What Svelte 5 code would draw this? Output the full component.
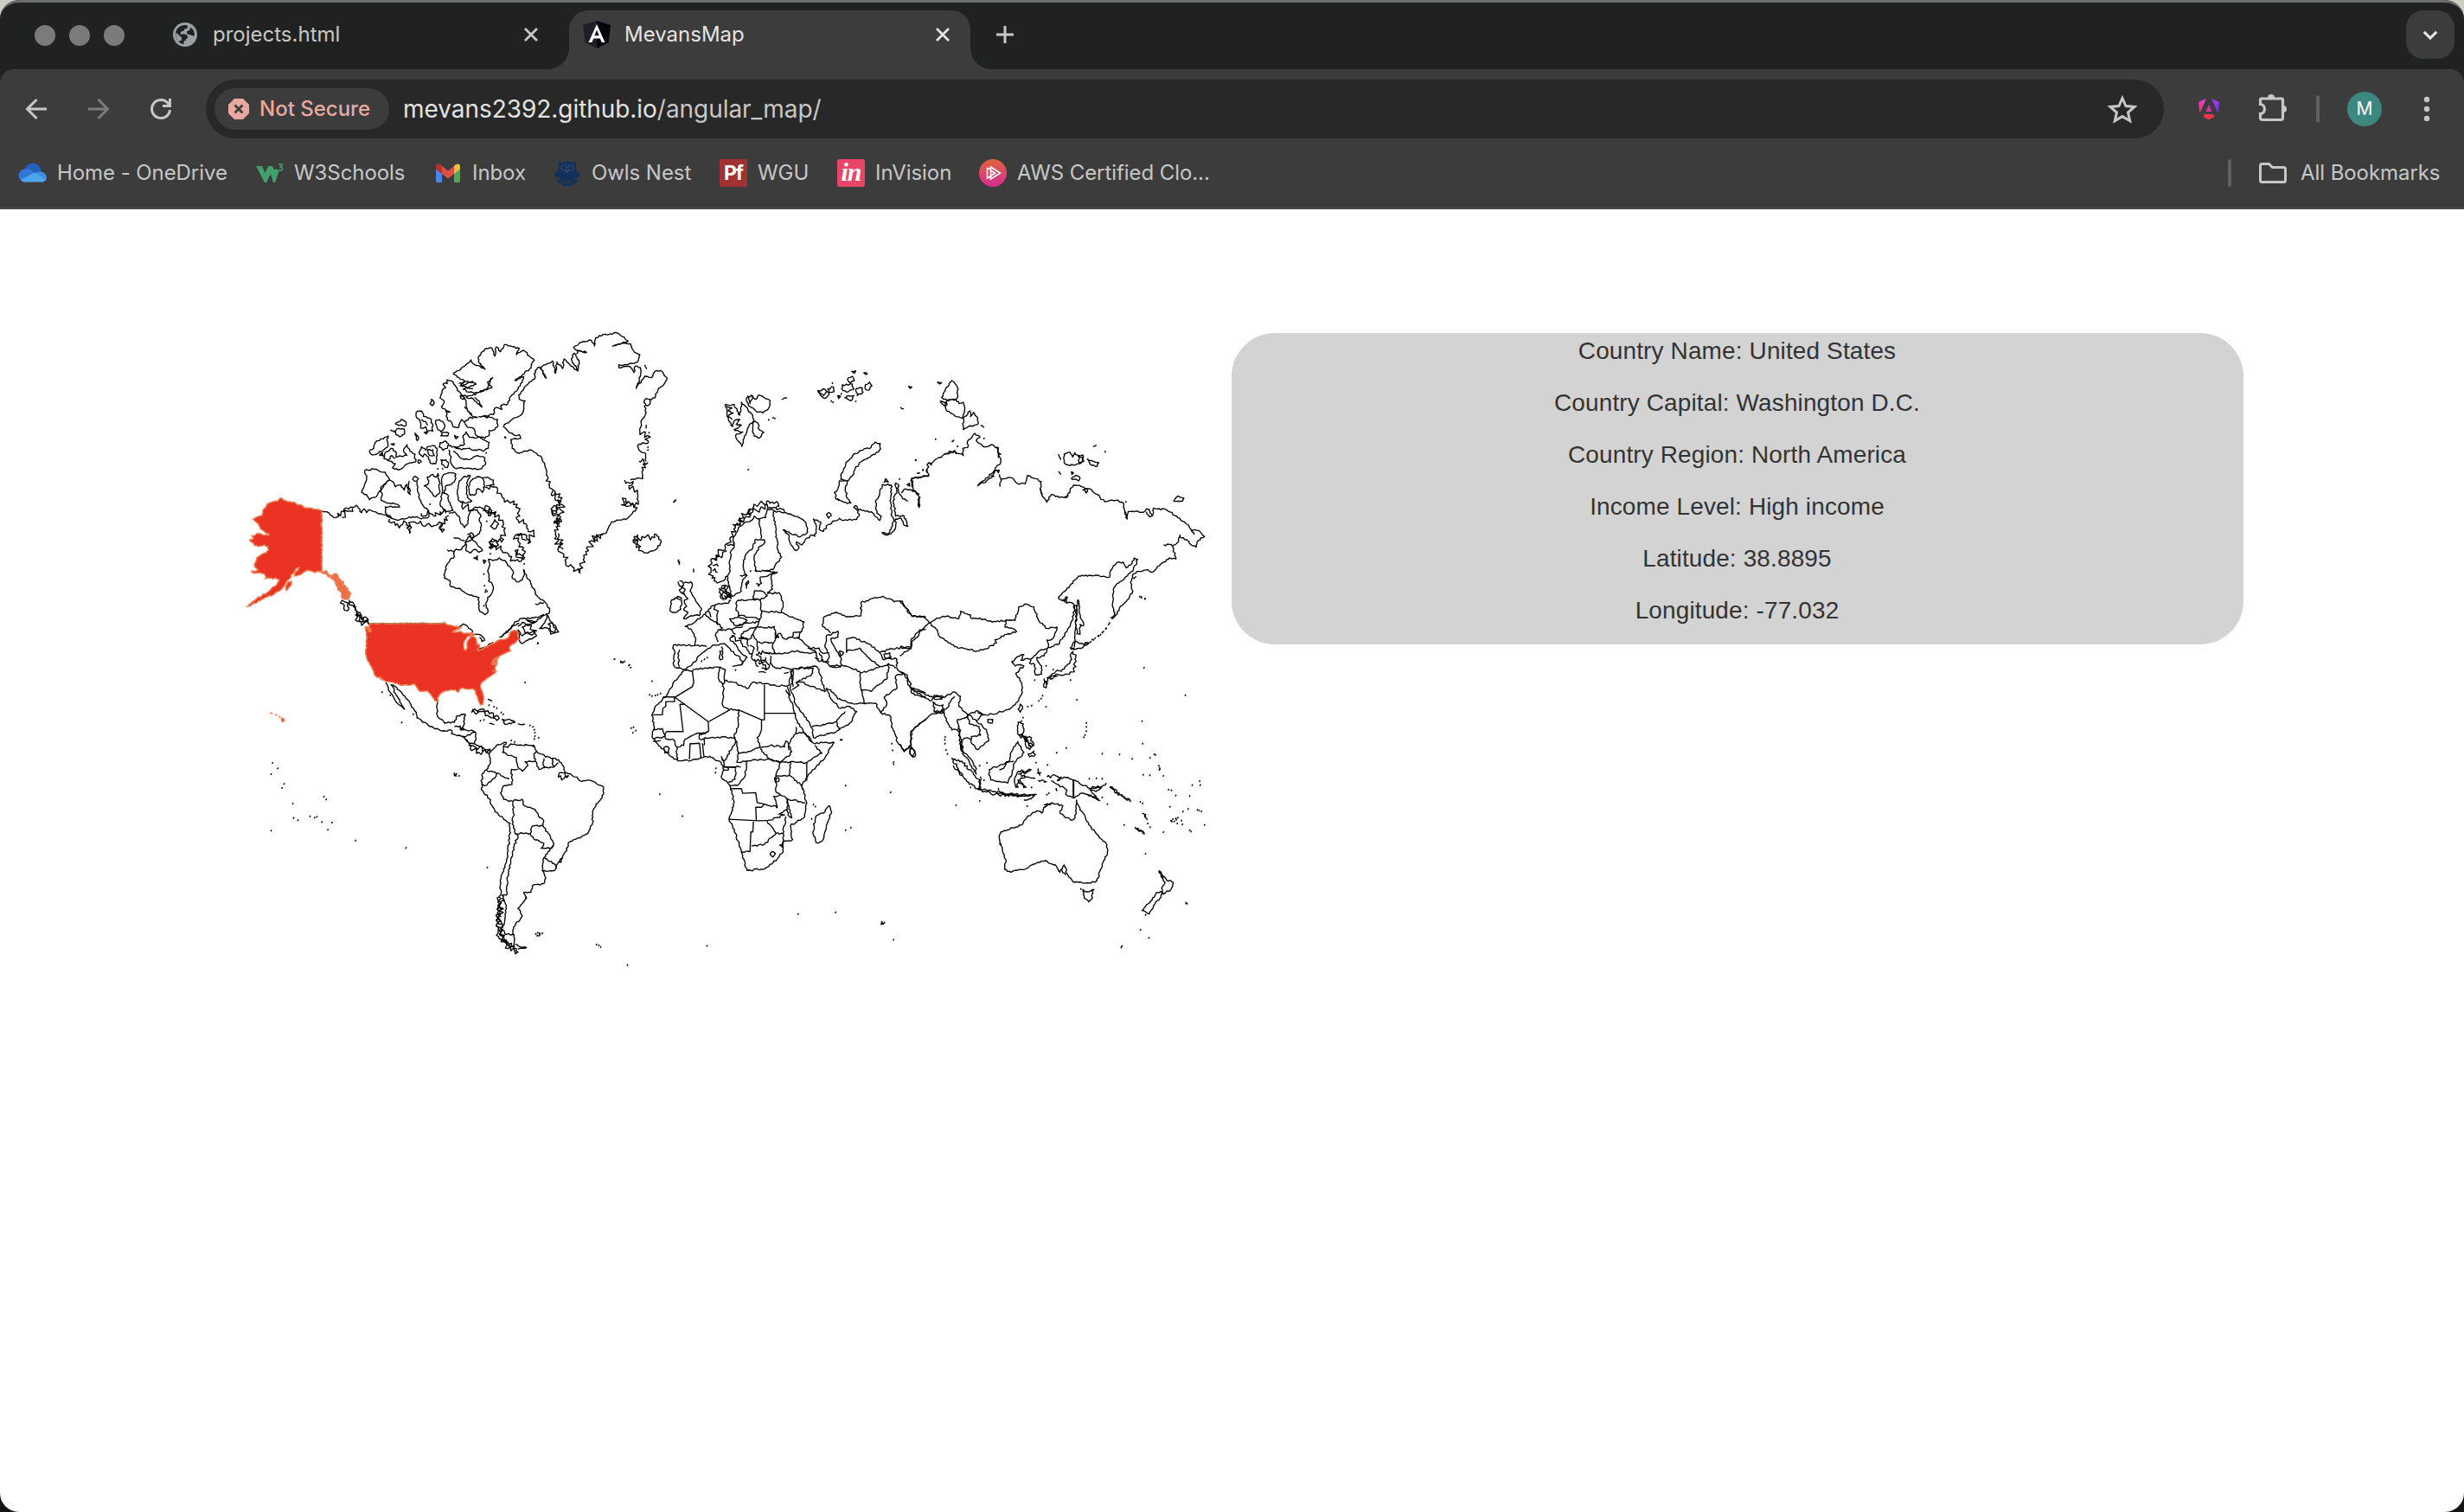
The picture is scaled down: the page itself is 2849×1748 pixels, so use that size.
<script>
  // Deterministic coastline roughening: long segments are split and nudged sideways.
  function trace(text, rough) {
    return text
      .split(';')
      .map((part) => {
        const closed = part.includes('z');
        const n = part.match(/-?\d+(\.\d+)?/g).map(Number);
        const pts = [];
        for (let i = 0; i + 1 < n.length; i += 2) pts.push([n[i], n[i + 1]]);
        if (closed) pts.push(pts[0]);
        let seed = Math.round(pts[0][0] * 7 + pts[0][1] * 13);
        const rnd = () => {
          seed = (seed * 1103515245 + 12345) % 2147483648;
          return seed / 2147483648 - 0.5;
        };
        let d = `M${pts[0][0]} ${pts[0][1]}`;
        for (let i = 1; i < pts.length; i++) {
          const [ax, ay] = pts[i - 1];
          const [bx, by] = pts[i];
          const len = Math.hypot(bx - ax, by - ay);
          const steps = rough ? Math.max(1, Math.floor(len / 6)) : 1;
          for (let s = 1; s < steps; s++) {
            const t = s / steps;
            const k = (rnd() * rough * 2) / len;
            d += `L${(ax + (bx - ax) * t - (by - ay) * k).toFixed(1)} ${(ay + (by - ay) * t + (bx - ax) * k).toFixed(1)}`;
          }
          d += `L${bx} ${by}`;
        }
        return d + (closed ? 'Z' : '');
      })
      .join('');
  }
  const dots = (text) => text.split(';').map((p) => `M${p.trim()}l4 2`).join('');

  const sheets = [
    {
      at: 'translate(270 370) scale(.33333)',
      rough: 12,
      fjord: `785 630 790 645 830 655 870 658 885 648 900 668 920 685 935 710 938 735 925 755 928 770 890 768 885 788 910 785 930 800 955 820 975 835 990 838 1000 830 975 800 995 815 1005 830 1005 790 985 765 975 748 1000 742 1020 775 1025 755 1040 740 1020 725 1005 705 980 690 988 665 970 640 950 625 930 615 915 590 890 575 870 580;
        352 686 360 670 380 665 398 655 415 650 425 642;375 685 385 672 400 662 410 652;540 690 545 703 560 712 585 710 600 705 610 740 612 715 620 700 640 705 670 708 700 712 712 700 722 735 724 705 740 695 745 678;650 670 665 680 675 660 700 680 715 665 735 670;400 970 412 990 425 1010 440 1020 465 1040;402 978 418 990 432 1014;422 1022 440 1045 468 1055 450 1035z;424 1026 450 1048;375 972 385 978 395 1008 383 990z;865 660 880 670 895 660 905 675 890 678z;1000 1065 1020 1060 1035 1075 1050 1078 1025 1090 1010 1085z;1090 1055 1105 1050 1118 1070 1112 1085 1098 1075z;810 745 830 742 820 755;985 740 1000 760 1015 765`,
      coast: `304 662 322 665 335 677 352 686;425 642 432 652 443 668 452 655 460 668 470 658 490 665 510 672 540 684;
        540 684 560 692 590 690 620 682 635 682 650 690 675 685;745 670 765 665 780 680 785 700 800 720 812 705 812 685 820 660 845 660 855 675 853 700 858 715 852 740 835 750 820 765 805 770 790 795 770 795 762 810 765 820 750 830 738 850 732 870 730 895 748 903 753 925 780 930 800 945 830 958 850 963 848 985 852 1010 870 1022 880 1015 875 990 880 962 893 950 900 930 895 912 883 905 885 885 880 870 888 850 883 830 905 832 920 825 945 840 960 860 968 870 965 895 980 908 1000 902 1008 880 1005 865 1015 890 1030 915 1045 945 1060 965 1080 980 1095 1000 1092 1018 1065 1025 1040 1033 1000 1035 980 1045 965 1060 950 1078 925 1098;
        1045 985 1075 980;740 797 765 805;762 755 800 765;820 745 805 765 805 800 820 808 835 795 850 805 862 800 845 780 830 765z;
        778 625 775 590 780 565 795 545 820 540 810 560 808 590 810 615 825 628 800 635z;820 560 830 550 850 543 862 548 870 575 862 598 845 585 838 605 820 608 815 585z;862 548 880 545 900 555 902 572 875 575;
        540 555 520 570 508 595 515 605 510 625 525 632 570 640 575 648 525 648 525 665 550 690;676 685 675 665 650 635 640 600 635 565 640 550 628 542 620 553 632 560;608 558 605 575 612 605 605 600 600 570 590 590 580 572 560 578 550 560 540 555;
        455 520 485 517 510 527 525 528 540 555 515 575 500 600 490 615 470 623 460 605 443 598 452 575 460 555z;
        690 535 700 545 708 532 712 560 714 600 700 612 690 605 675 585 660 575 675 565 670 545z;728 535 745 530 770 535 765 560 750 572 735 575 730 600 722 598 722 545z;722 600 740 605 750 640 760 660 735 665 715 640z;
        760 455 775 465 785 478 800 483 825 480 845 470 868 475 873 500 860 515 830 517 790 512 765 513 755 500 750 470 745 450;735 485 745 495 740 512 720 500 718 485z;
        650 440 665 452 670 440 690 435 705 445 705 470 700 498 680 495 675 475 660 465 655 475 642 460z;672 450 690 450 695 470 680 470z;
        525 460 545 445 560 455 562 475 580 472 600 470 588 455 600 432 610 455 628 465 630 492 610 495 590 508 570 520 550 512 560 498 540 490 520 480z;532 488 548 470 560 480;505 470 515 460 518 472z;
        470 455 485 445 490 425 510 412 535 402 530 415 535 435 520 450 500 462 480 468z;632 320 650 315 658 335 680 340 688 360 690 385 670 385 665 370 648 375 645 350 635 340z;648 345 665 352 672 365;
        700 348 712 345 728 358 730 375 718 388 705 375z;560 360 580 345 597 355 595 368z;560 385 570 375 590 378 592 395 575 405 562 398z;543 380 558 390;628 392 640 405 636 418z;722 390 745 392 742 402 718 402z;765 400 778 405 770 412z;685 275 695 288 688 297 680 290z;
        715 425 735 420 745 430 740 445 725 452 712 440z;660 390 672 388 668 395z;545 430 556 429 555 434z;640 485 650 492 640 497z;
        780 440 800 430 795 400 805 388 815 405 835 410 850 405 865 415 885 425 882 445 865 455 850 448 830 452 810 445 790 450 765 440z;745 437 775 440;
        740 207 760 215 775 245 795 262 805 280 808 305 830 335 845 338 815 340 800 355 790 345 780 372 760 370 755 355 740 345 735 315 750 320 735 312 720 300 730 285 715 270 722 245 735 235 725 222 740 220z;800 300 825 330;785 262 797 262 797 275 787 272z;
        760 185 780 175 800 160 822 138 835 155 870 170 848 145 850 125 870 100 895 97 905 125 910 93 925 110 938 85 960 90 990 98 980 120 1005 105 1025 125 1042 140 1025 170 1000 190 975 210 1005 197 1000 215 985 240 960 265 950 290 925 298 930 310 905 305 900 328 850 335 890 338 915 345 915 370 905 380 885 383 885 400 870 410 850 405 840 400 830 375 810 372 800 358;
        760 185 785 205 800 210 785 228 815 215 840 222 795 240 815 250 845 252 875 240 898 200 880 215 895 235 860 248 820 262 790 265;805 268 825 270 845 290 860 302 850 280 835 268;790 230 830 238;780 220 830 212;850 148 872 172;
        890 715 905 692 918 708 905 725z;885 770 910 765 918 780 895 790z;832 825 845 818 845 832z;865 832 874 835 868 844z;
        1075 1020 1050 1045 1020 1055 1000 1048 985 1062;1085 1022 1078 1050 1060 1070 1085 1068 1100 1080 1115 1085 1118 1065 1105 1050 1095 1040z;985 1075 1000 1095 1015 1085 1040 1080 1050 1095 1020 1110 1000 1122 990 1110z;1015 1040 1045 1045 1030 1048z`,
      border: '',
      specks: '678 638;705 515;722 515;875 697;887 810;865 880;867 920;865 990;873 460;872 935;876 940;870 942;1052 1120;940 408;1005 845'
    },
    {
      at: 'translate(540 370) scale(.33333)',
      rough: 12,
      fjord: `290 605 285 575 275 530;592 640 540 640 590 652;455 745 430 765 420 800 405 825 400 860 390 878 370 860 350 855 335 815 318 785 305 745 320 715 300 705 315 680 292 660 310 640 325 630 290 605;300 590 315 615 328 640 322 670 325 700 310 705;575 765 590 745 600 765 615 755 640 752 655 742;598 785 575 762 590 752;545 555 575 560 560 575 590 590;532 640 550 620 560 630;595 490 625 495 605 525;598 385 625 400 628 425;455 745 440 760 470 745;315 740 328 790 332 795`,
      coast: `275 530 270 510 258 478 240 462 215 450 178 462 155 445 150 415 185 410 180 398 160 398 140 385 125 370 135 358 160 340 188 327 195 300 200 280 180 275 178 260 195 240 215 215 232 205 235 175 250 163 273 202 255 165 295 142 305 185 310 145 330 168 335 135 360 160 383 177 387 140 370 115 360 135 383 175;378 118 382 105 413 112 375 103 368 95 400 75 430 70 440 90 445 62 470 50 520 45 558 72;502 92 530 82 565 82 575 105 598 120 590 145 560 153 525 155 525 165 565 162 577 182 582 160 600 165 600 195 585 237 615 195 638 200 650 178 675 178 692 200 680 225 662 238 650 270 632 275;558 72 530 84 502 92;632 275 620 272 612 285 620 297 633 292z;615 295 620 320 605 345 598 385;628 425 595 430 590 437 600 455 615 460 620 490;605 525 608 550 585 550 565 555;590 590 592 640;590 652 555 688 500 700 480 740 455 745;655 742 672 770 655 795 625 808 595 800 600 785 578 772;290 655 300 643 312 650 310 668 297 672z;308 690 320 690 318 708 308 705z;615 155 622 170`,
      border: '',
      specks: '128 405;618 365;618 372;628 390;624 440;624 450;714 630;718 626;730 832;733 838;733 845;508 1175;530 1183;538 1186;560 1195;242 1120'
    },
    {
      at: 'translate(740 370) scale(.33333)',
      rough: 11,
      fjord: `265 912 248 895 245 860 245 830 270 808 295 790 310 760 330 720 345 690 375 660 410 640 445 628 480 645 462 650 440 640 415 655 390 665 360 690 335 705 320 708;250 850 270 855;250 870 268 875;255 830 285 815 300 800;300 780 325 770;375 655 385 675;345 685 355 700;470 650 500 665;280 925 295 920 300 945 315 965 295 970;290 955 318 958;135 905 150 920 145 945 155 950`,
      coast: `295 292 315 295 325 292 335 315 345 330 350 285 365 300 375 318 390 330 395 350 378 362 370 385 360 410 352 438 335 415 330 400 355 388 325 380 350 365 332 362 345 345 325 350 320 370 305 345 300 320z;
        368 270 385 260 400 275 410 260 430 270 450 280 445 305 425 322 400 315 380 300 370 285z;390 352 405 355 412 380 428 390 410 410 395 402 390 380z;490 276 508 270;299 300 318 305 305 315 322 322 304 335 318 345;372 262 380 290 390 262;
        615 245 640 240 655 255 640 272 625 262z;620 248 635 262 645 248;650 238 670 232 672 248 655 250z;700 225 735 222 740 240 715 250 698 238z;718 205 735 195 742 210 728 218z;748 238 770 235 772 250 752 262z;780 225 795 215 803 228 795 242 780 240z;715 265 740 262 730 280 715 272z;733 178 747 176 742 185z;775 183 787 186 782 189z;930 230 942 232 936 237z;902 302 914 308;684 262 694 264 688 272z;
        695 540 705 515 718 490 740 465 770 452 800 442 815 423 832 428 833 448 815 465 790 478 765 492 745 515 735 540 720 558 695 552z;690 558 718 558 710 590 720 620 730 635 705 632 680 622 673 598 685 585z;
        265 912 285 905 302 888 312 870 308 840 315 800 325 790 322 755 345 715 370 700 385 695 395 680 410 690 418 730 418 758;302 888 305 915 310 935 318 958 330 950 350 940 355 900 370 885 360 870 358 840 365 815 390 790 400 760 430 762 432 772 415 785 395 815 398 870 430 870 460 865 475 840 490 822 478 800 470 740 468 700 460 680 465 662 440 655 435 685 410 690;
        465 662 490 668 520 672 550 685 575 705 580 735 555 752 520 740 495 728 515 745 520 775 540 800 550 790 540 770 560 780 570 765 595 745 605 750 610 720 600 690 625 700 620 725 635 733 650 710 690 688 700 695 750 692 758 680 755 662 740 650 745 643 757 658 775 660 800 665 830 695 835 680 820 670 815 630 830 600 840 570 870 572 868 620 872 680 880 695 870 725 860 740 838 738 850 745 868 742 885 720 885 690 905 688 915 712 928 715 915 680 885 680 880 640 878 615 890 600 885 565 895 570 895 595 910 620 928 628;
        905 600 920 585 955 595 968 615 963 645;968 605 945 590 942 548 1000 542 995 520;845 562 850 550 860 562z;645 675 655 668 662 678 652 687z;925 572 933 566 934 576z;272 930 280 965 290 972;345 885 368 886;365 915 375 905 368 930z;130 835 136 845;185 862 186 875;430 870 475 875 455 882`,
      border: '',
      specks: '443 345;458 338;464 340;372 518;664 218;660 280;666 284;745 281;695 255;708 268;897 550;952 485;960 530;978 518;116 628;380 870;400 868;682 620;686 624'
    },
    {
      at: 'translate(270 680) scale(.33333)',
      rough: 9,
      fjord: `925 1065 915 1100 912 1165 920 1215 950 1250 985 1262 970 1240 940 1225 925 1180 925 1130 930 1075;918 1105 935 1110;912 1130 928 1140;912 1150 928 1165;918 1180 930 1190;920 1200 940 1215;935 1220 960 1245;945 1225 972 1240;920 1070 918 1110 916 1160 924 1205 948 1235;825 430 850 422 885 435 920 452 885 445 850 428z;815 545 850 570 890 565 870 560 840 552z;1125 655 1140 640 1160 650 1145 660z;1125 950 1140 935`,
      coast: `526 328 545 365 560 390 592 420 580 400 560 365 545 335 565 345 600 385 632 430 635 450 680 480 715 493 755 493;
        706 394 705 440 730 468 765 465 775 442 803 438 795 480 785 490 830 495 838 500 835 540 875 560 890 558;755 493 755 505 780 510 800 520 820 545;
        765 480 785 478 785 490;780 510 800 515 835 500;785 490 800 488;800 515 812 535 835 540;930 455 950 455 975 465 940 472z;885 470 903 472;985 470 1010 472;880 385 895 392;
        890 570 910 545 945 535 935 550 950 552 960 540 1000 545 1040 545 1050 565 1080 585 1115 590 1135 605 1150 640 1190 655 1200 668 1240 668 1282 690 1282 715 1248 765 1243 820 1225 852 1160 882 1155 910 1130 945 1110 980 1070 980 1082 1005 1075 1025 1035 1032 1030 1055 1005 1055 1015 1075 985 1110 1000 1138 970 1175 968 1200;
        975 1235 1000 1246 1015 1246 985 1252;925 1065 925 1010 945 950 955 880 958 815 905 775 885 730 858 695 860 680 860 650 875 630 890 605 885 570;
        935 550 932 570 955 580 980 588 985 620 1000 635 1020 615 1010 602 1045 600 1040 575 1050 565;1045 600 1058 628 1080 622 1110 620 1125 605;1075 590 1072 605 1080 622;1108 590 1104 608 1110 620;
        985 628 962 628 965 680 935 685 925 710 935 732 955 740 1000 732 1003 750 1045 768 1060 795 1075 808 1072 825 1090 850 1105 875 1110 890 1075 935 1070 980;
        875 630 910 642 955 662;910 642 905 658 870 685 860 680;968 742 970 790 965 805 975 850 985 858 970 900 960 950 950 1000 945 1065 930 1065 945 1100 938 1160 932 1180;
        975 852 1028 850 1035 825 1072 825;1028 850 1040 870 1075 885 1065 902 1095 902 1110 890;1075 932 1115 960 1118 970;935 1185 940 1200 972 1202 972 1245;
        780 135 795 124 810 132 822 142 828 155;835 160 855 162 870 180 860 185 852 170;842 213 868 205 900 188;920 170 945 155 965 132 990 122`,
      border: '',
      specks: '512 360;580 465;1008 326;1318 245;1340 256;1345 256;1052 190;132 605;150 624;127 644;172 678;165 692;202 746;310 722;318 732;205 796;220 804;262 790;278 795;286 792;303 810;338 812;324 837;127 840;420 874;595 900;877 968;762 642;766 646;770 643;763 648;768 650;779 650;1045 1198;1052 1194;1060 1200;1068 1196;1050 1204;1058 1196;1056 1204;1256 1235;1264 1238;1270 1243;1010 1072;883 405;900 410;910 415;925 430;932 436;853 459;865 456;1025 475;1035 480;1040 490;1042 500;1042 512;1040 522;1055 518;960 527;972 532;1008 542;1036 548;540 370;620 436;935 462'
    },
    {
      at: 'translate(720 560) scale(.33333 .35714)',
      rough: 8,
      fjord: `340 335 355 330 350 350 370 355 355 370 342 360z;470 555 480 575 500 580 505 595 485 585 470 575;455 565 480 570 495 560;480 595 500 600;375 490 400 505 430 535 445 560 460 580 470 590;460 550 490 545 510 550;190 315 205 330 200 350 210 355;530 480 540 495 525 495`,
      coast: `210 320 235 315 240 330 232 345 245 365 258 385 272 402 265 425 235 425 210 435 225 415 210 405 220 395 212 375 225 370 210 355;165 380 185 365 203 375 200 405 180 415 163 410z;175 372 190 362 205 370;
        375 375 360 385 325 388 305 395 285 420 270 430 250 445 215 460 235 468 250 495 248 522 205 520 175 520 172 530 180 545 175 565 178 590 200 595 215 600 240 582 255 570 262 555 290 535 318 520 350 515 375 540 400 555 415 575 410 585 430 560 405 540 385 515 370 500 385 490;
        530 548 518 530 520 515 532 490 545 482 560 500 580 495 610 497 635 520 670 545 640 545 600 540 560 545z;585 495 590 480 620 475 605 500;512 555 510 580 530 595 565 595 600 597 665 588;640 530 680 530 690 545 715 545;
        590 600 588 635 580 655 583 670 600 715 635 755 655 790 660 820 740 800 790 770 810 735 780 718 755 725 730 705 715 680 705 660 720 665 745 695 770 700 785 708;565 665 575 690 590 720 600 760 625 800 650 825;
        205 600 240 605 250 598 330 592 355 600 352 635 380 640 435 660 450 640 490 645 530 652 575 650 588 600;
        210 605 180 635 165 660 150 685 110 720 100 748 108 790 100 815 130 850 165 880 190 895 240 892 300 880 340 900 350 925 340 945 370 975 385 1030 368 1083 390 1130 410 1190 430 1250 490 1245 520 1225 555 1190 558 1155 588 1150 580 1105 630 1075 635 1025 620 975 640 945 700 885 732 835 700 835 665 840 650 825;
        715 1040 723 1060 705 1110 690 1155 670 1160 658 1125 668 1075 700 1060z;785 708 840 710 875 708 895 740 925 748 935 790 955 840 975 865 1000 845 998 800 1050 760;1000 850 1015 875 1005 883 995 870z;
        705 490 745 475 745 495 720 500 735 530 755 560 755 590 720 590 700 575 715 560 700 520z;695 430 735 415 780 428 825 425 825 382 900 362 940 380 968 378 1000 425 1050 430;695 430 692 460 720 480;890 545 920 535 1000 525 1005 505 1020 495 1030 475 1050 470;
        800 495 860 520 890 545;775 540 820 530 850 560 890 590;890 545 900 565 950 565 950 590;905 550 925 545 930 560 910 565z;750 540 765 545 755 555z;760 585 820 605 825 660 840 710;715 590 760 585;
        825 610 860 600 900 590 920 580 920 600 915 630 885 650 860 670 825 665;920 580 950 595 970 615 945 620 950 660 905 690 915 710 895 740;970 610 995 640 1000 665 1050 690;1000 660 1050 675;
        665 588 680 600 690 640 700 672;670 545 675 570 715 575;680 545 695 570;600 595 660 595 650 620 600 640 610 650 585 665;600 640 620 640 700 672;
        655 785 700 778 740 768 770 735;740 768 748 795;395 378 392 400 400 425 440 430 475 435 480 410 475 375 450 372 400 375z;325 388 315 405 330 410 325 445 345 465 330 470 320 490 330 510;370 435 400 428 430 440 415 455 385 455z;400 455 470 445;
        285 420 310 440 330 455;295 410 305 430;455 345 480 345 500 360 475 375 452 370z;515 290 518 340 500 350;475 300 515 290 535 283;475 300 480 320 470 330 462 320;480 410 550 415 600 435 628 445 620 475;500 355 540 350 555 385 550 415;475 435 465 460 500 465 525 460 530 490;
        410 485 440 465 465 460 450 485 440 500 410 495z;450 485 465 510 520 515;465 510 465 540;400 497 430 500 435 525;440 520 455 530 445 550;330 470 375 470 415 460;375 470 390 485;248 522 290 525;195 535 190 560 195 590;335 540 345 540 345 565 337 568z;340 525 345 538;270 575 275 570;380 590 410 585;470 608 495 610;558 612 575 608;490 545 530 548;665 560 680 565`,
      border: `138 688 178 688 178 703 148 703 148 718 138 725 136 746 102 746;178 688 295 768;178 690 240 655 245 640 240 605;215 712 197 712 208 800 150 800;295 768 297 800;297 768 370 730;400 730 480 762 490 762 490 648;490 741 600 741;480 762 480 795;350 915 390 915 390 920;348 925 365 925 365 915;372 985 410 985 415 1000 460 998 465 1030 490 1035 480 1045 460 1045 462 1088;365 1084 470 1089 500 1088;452 1092 450 1125 443 1125 440 1190;535 1048 530 1045;637 900 637 960;230 840 265 838 270 885;232 840 230 890;275 838 280 880;775 545 775 500 800 495;580 600 590 655;570 655 580 685;405 495 430 500`,
      borderRough: `297 800 265 805 215 825 210 845 185 850 188 893;150 800 145 815 105 825;105 795 135 790 150 825 178 828 185 850;103 832 130 830;370 730 345 715 350 660 330 625 335 592;352 635 345 655;370 728 400 730 400 780 385 815 395 840 400 870;480 795 465 820 475 850 440 865 400 870 395 900 430 895;297 800 265 810 265 825 285 820 330 818 385 820 390 835 350 895 340 880;285 820 280 845;470 850 510 845 560 850 565 830 585 865 575 880 540 900 510 890 475 855;345 885 350 915 408 915;430 895 510 890 545 900 580 898 600 900 637 900 690 870 665 845;575 860 575 840 600 800 600 785;600 805 630 805 655 835;580 898 575 942 620 975;530 945 575 942;545 900 530 950 530 995 545 1005 570 1018 632 1030;430 895 420 950 395 975 370 975;390 920 388 955 365 965;490 1035 535 1045 522 1010 545 1005;500 1088 560 1070 540 1068 570 1050;500 1090 530 1130 555 1130 565 1075;445 1170 490 1165 530 1130;555 1130 553 1165;410 1188 440 1190;568 1018 575 1050 585 1080 572 1070z;510 1195 518 1188 528 1195 520 1206z;543 1168 552 1165 553 1175z;140 855 150 848 160 855 158 868 145 870z;525 950 540 950 538 962 528 962z`,
      specks: '3 572;18 585;24 592;98 636;90 680;98 684;110 682;118 680;128 676;26 788;34 785;42 796;32 803;125 1002;204 1073;320 918;318 932;930 838;933 860;936 898;936 905;770 974;926 996;770 1118;788 1110;652 1082;658 1036;665 1042;605 1390;735 1384;895 1415;900 1422;904 1418;893 1422;897 1419;936 1473;289 1493;13 1555;752 826;757 826;618 975;622 985;280 565;290 560;180 50;388 600'
    },
    {
      at: 'translate(1050 400) scale(.33333)',
      rough: 6,
      fjord: `65 440 70 405 80 415;125 376 160 362 165 375;305 350 320 375 312 388;455 495 465 515;540 525 555 518;605 500 620 495 615 510z;540 885 550 870 535 880 550 892;885 690 905 688 915 695;980 640 990 655;700 942 712 935;755 575 760 600;35 540 40 525 36 560z`,
      coast: `12 490 10 460 70 450;72 410 100 390 130 375 160 365 190 380 188 355 205 352 205 330 230 303 248 315 235 328 262 350 290 342 310 360 320 400 300 430 265 465 240 485 290 455 300 430;300 430 315 430 312 440z;285 448 298 452;315 445 320 460 318 488;320 460 345 456 365 462 380 478 405 478 412 450 440 460 460 470 458 500 468 525 480 542 495 515 510 522 550 525 560 500 572 482 600 488 635 498 655 515 680 540 720 535 745 545 750 572 758 600 762 574 815 577 825 565 835 567 845 590 835 592 825 575;845 590 850 562 895 568 930 590 965 618 985 640 1008 640 1027 660 1005 675 998 698 975 685 965 672 940 662 942 655 935 680 915 695;
        915 695 928 738 905 735 870 762 843 785 830 775 800 782 780 790 770 820 778 850 765 875 740 900 715 938 708 890 710 845 722 825 750 805 780 775 795 740 782 735 775 755 755 770 745 750 722 752 700 780 697 802 670 800 650 795 590 798 560 830 535 855 520 875 545 890 565 890 575 900;
        150 120 165 135 172 150 168 182 135 188 115 178 128 150z;133 190 165 185 175 200 190 195 195 215 188 250 165 245 130 220z;190 250 213 225 215 245 225 230 240 250 240 272 205 282 190 290z;110 192 130 195 125 208z;100 126 115 128 108 132z;250 275 262 283;
        540 375 560 368 570 385 577 370 590 385 605 385 600 405 560 415 540 405z;590 380 605 378 608 400 592 405z;620 392 660 405 655 417 630 410z;565 460 580 448 595 458 590 468z;565 436 572 440 567 446z;920 538 935 520 955 528 950 538z;640 348 652 343;520 375 528 395;520 435 528 446;780 808 790 800`,
      border: '575 900 577 920',
      specks: '2 142;92 322;150 330;154 327;168 347;24 395;35 440;48 430;260 320;680 366;752 540;800 868;806 872;818 876;692 965;684 978;674 990;664 1000;655 1005;645 1012;635 1017'
    },
    {
      at: 'translate(1040 680) scale(.33333)',
      rough: 5,
      fjord: `600 220 610 240 605 290 580 298 550 300 515 312 540 290 570 280 590 260 595 225z;520 315 548 305;500 315 512 330 508 345 498 335z;500 320 510 335;180 590 215 600 260 650 278 665 275 695 240 680 210 640z;185 615 200 630 215 650;270 698 330 705 400 715 470 715 420 722 330 715z;340 712 380 716 440 718;430 735 460 725 475 715;415 508 450 515 465 545 450 560 435 540 440 525z;430 520 450 550;420 512 445 530 460 550;445 575 465 565 465 583 450 585z;425 515 440 520 455 555;410 635 455 630 440 638 412 645 435 655 415 665 438 690 410 665 410 690 402 690 400 655z;728 690 760 710 800 740 770 722z;815 828 850 852;820 835 848 848;205 480 215 545 218 575;480 625 485 650;475 640 490 638;120 430 150 430 155 438;510 655 540 650 560 655 545 668;655 695 700 688 715 675;500 750 530 745;500 760 525 750;480 665 510 670;430 650 470 660;640 190 660 188;840 780 855 798;650 715 690 735;898 980 915 1005;590 205 605 215;560 975 575 995;520 308 500 330;680 730 695 738`,
      coast: `102 120 150 97 205 105 210 80 245 92 245 102 290 108 320 118 370 110 365 135 385 138 405 150 370 160 330 178 335 190 300 210 268 218 190 203 140 170 130 145z;370 110 400 112 412 65 440 55 465 65 480 110 510 140 545 135 530 175 510 180 515 205 480 220 455 245;0 45 40 95 80 100 102 120;102 120 65 150 40 175 38 210 0 235;0 203 40 210;
        0 290 25 300 28 335 40 350 115 378 150 378 190 360 210 375 205 410 235 440 270 425 290 440;40 350 42 365 110 390 115 378;118 372 148 375 145 385 120 385z;455 245 435 245 420 250 430 230 415 235 388 255 400 270 415 265 430 270 402 295 420 325 425 360 408 395 380 420 340 432 300 440 285 440;455 245 450 260 468 265 470 300 492 298 492 270 480 255 475 240 500 235 515 205;
        515 205 550 195 580 150 600 110 605 60 612 60 612 100 608 180 605 205;618 40 622 60 625 90 637 130 625 125 625 160 614 158 610 110 616 60z;605 185 640 195 655 190 635 205 610 212 595 212z;115 395 130 405 150 405 145 435 120 430z;150 425 105 440 75 465 40 495 38 545 15 565 0 540;38 550 53 570 45 585 35 575z;
        150 420 165 465 180 492 195 490 205 500;190 375 175 395 165 415 150 420;200 455 205 480 208 540 218 575 240 600 265 645 262 620 235 580 220 570 213 530 225 520 248 525;235 440 240 470 275 480 280 510 248 515 250 540 270 560 290 545 308 530 300 490 265 460 285 440 270 432;200 455 225 450 240 440 265 460;305 455 322 455 320 468 305 465z;
        410 530 385 570 380 600 345 615 310 628 308 645 315 665 345 670 375 675 390 640 395 610 405 595 420 585 430 570 410 535;345 630 360 625 370 603 395 600;410 465 428 470 430 495 420 520 408 505z;418 402 425 410 418 430 410 420z;278 665 278 698;
        545 668 570 655 600 665 640 685 665 695 700 690 680 705 660 700 690 735 650 715 625 712 605 728 575 715 580 700 545 680 525 668;613 735 625 770 640 785 655 820 680 850 715 885 720 915 700 970 683 1015 655 1022 632 1022 600 1018 580 990 570 960 555 985 540 960 505 945 465 957 440 972 385 985 363 975 368 950 355 905 345 870 350 845 420 822 440 795 475 772 492 780 500 760 530 745 565 755 555 780 595 805 608 795z;
        635 1045 650 1053 668 1045 668 1075 655 1088 640 1075z;900 980 925 1012 948 1020 940 1045 915 1060 908 1040 920 1020z;905 1052 912 1060 880 1100 865 1130 840 1118 870 1085 890 1055z;900 620 900 632`,
      border: '601 665 601 725;603 665 603 725',
      specks: '155 515;154 525;154 538;158 560;163 574;193 752;275 737;440 755;493 372;488 382;480 390;455 406;442 410;466 318;505 268;530 282;590 318;612 386;988 370;838 460;645 466;645 480;645 495;640 508;636 516;575 553;542 570;700 573;760 576;804 591;840 538;866 587;880 575;885 577;896 615;898 628;912 650;842 646;865 648;930 698;940 700;955 718;1012 682;1038 668;1040 682;1003 720;935 757;998 765;980 774;1030 768;1036 770;1044 773;938 805;945 800;955 798;962 795;950 808;942 808;957 802;960 815;975 805;978 818;1003 838;1008 843;1055 820;912 845;850 920;776 820;866 828;832 740;840 745;990 1090;994 1093;833 1184;862 1212;766 1245;768 1240;626 1042;850 1132;655 660;680 658;700 660;718 748;700 725;540 695;542 700;515 710;508 715;500 670;510 612;470 604;300 605;275 615;290 665;340 695;425 680;430 685;428 690;455 690;425 448;420 460;850 785;848 792;855 800;858 815;845 275;348 888;345 886;670 1045;700 153;712 140;725 120;740 100;735 104;660 185;670 178;688 165;505 410;278 655;280 662;835 30;848 36;243 690'
    }
  ];

  const alaska =
    '304 662 285 656 270 652 250 652 235 642 215 636 200 632 180 627 172 624 160 617 152 628 135 630 122 634 110 650 100 660 97 678 80 683 66 690 78 702 90 718 98 728 110 738 122 742 118 748 100 745 88 740 75 745 62 748 68 758 54 762 65 772 72 782 90 784 105 780 118 785 120 798 112 808 98 812 85 820 78 832 74 842 72 855 84 866 74 872 60 872 68 878 88 876 105 880 112 892 108 897 130 895 148 897 158 902 150 915 130 932 115 945 98 955 80 965 62 978 44 994 60 990 80 980 95 970 110 962 130 957 145 945 160 938 172 925 180 912 190 900 198 885 210 872 218 860 228 858 215 872 210 888 225 884 240 876 250 870 265 870 280 876 300 873 304 868z;180 930 188 908 200 906 196 922 182 938z';
  const panhandle = '300 873 304 868 325 876 340 888 355 880 370 900 385 920 395 935 406 948 400 962 385 968 374 962 368 940 355 920 345 900 335 890 318 880z';
  const states =
    '472 122 728 122 730 117 736 125 750 128 765 133 790 136 775 143 757 153 770 152 785 150 797 158 810 156 828 155 834 162 820 165 808 170 800 182 796 195 798 210 802 217 808 210 808 195 812 180 822 168 832 168 840 175 843 188 840 195 848 193 852 205 842 213 850 216 870 205 885 198 905 190 912 183 925 177 945 175 955 165 962 150 975 146 984 150 984 165 989 178 978 187 965 195 955 205 960 218 948 222 935 228 920 235 912 248 912 262 905 275 910 290 900 298 885 308 870 320 856 332 855 345 862 362 866 385 864 402 855 405 848 390 842 372 838 355 828 348 812 350 795 346 782 352 780 360 762 353 745 355 725 360 712 372 706 382 708 394 695 388 685 372 672 356 655 358 645 358 632 340 622 332 605 337 585 337 560 330 545 325 526 324 510 315 492 305 485 290 478 275 470 258 460 240 457 222 460 205 458 185 460 165 455 135 470 140z';
  const sounds = '893 265 903 245 918 240 908 262 898 268;456 135 470 138 474 152 465 148;895 285 908 292;770 140 785 142;815 160 830 163;845 195 852 205;500 308 518 318';
  const hawaii = '125 432 133 435;142 438 150 440;155 444 162 448;164 454 168 450 176 458 168 464z';

  const facts = [
    ['Country Name', 'United States'],
    ['Country Capital', 'Washington D.C.'],
    ['Country Region', 'North America'],
    ['Income Level', 'High income'],
    ['Latitude', '38.8895'],
    ['Longitude', '-77.032']
  ];
</script>

<div class="desktop">
  <div class="window">
    <header class="tabs">
      <div class="lights"><i></i><i></i><i></i></div>
      <div class="tab idle">
        <svg class="ic32" viewBox="0 0 32 32"><circle cx="16" cy="16" r="14" fill="#9aa0a6" /><path d="M16 5C9 5 5 10 5 16c0 6 4.500 10.500 9.500 11v-3.500c2 0 2.500-1 2.500-2.500 1.500 0 2-1 2-2 0-2.500-1.500-3.500-4-3.500h-4.500c0-2.500 1-3.500 3-3.500 1.500 0 1.500-1 1.500-2.500 3 0 4-1 4-3.500C18.500 5.300 17 5 16 5zM22 7.500c0 3-1.500 4.500-4 4.800 0 2.500.5 3.700 2.500 3.700 2 0 3 1.500 6.200 1.500C27.500 13 25 9.500 22 7.500z" fill="#202221" /><path d="M5.500 13.500L12 19.500v3L8 24C5.500 21 5 17 5.500 13.500z" fill="#9aa0a6" /></svg>
        <span class="title">projects.html</span>
        <svg class="x" viewBox="0 0 18 18"><path d="M2 2l14 14M16 2L2 16" /></svg>
      </div>
      <div class="tab active">
        <svg class="ic32" viewBox="0 0 32 32"><path d="M16 0l16 5-2.500 20L16 32 2.500 25 0 5z" fill="#1d2029" /><path d="M16 0l16 5-2.500 20L16 32z" fill="#04060e" /><path d="M16 4L6.500 25h3.800l2-4.600h7.500l2 4.600h3.700zm0 6.500l2.700 6.800h-5.400z" fill="#fff" /></svg>
        <span class="title">MevansMap</span>
        <svg class="x" viewBox="0 0 18 18"><path d="M2 2l14 14M16 2L2 16" /></svg>
      </div>
      <svg class="plus" viewBox="0 0 22 22"><path d="M11 1v20M1 11h20" /></svg>
      <button class="search" aria-label="Search tabs"><svg viewBox="0 0 20 12"><path d="M2 2l8 8 8-8" /></svg></button>
    </header>

    <div class="chrome">
      <nav class="toolbar">
        <svg class="nav" viewBox="0 0 24 24"><path d="M24 12H2M12.500 1L1.500 12l11 11" /></svg>
        <svg class="nav dim" viewBox="0 0 24 24"><path d="M0 12h22M11.500 1l11 11-11 11" /></svg>
        <svg class="nav" viewBox="0 0 24 24"><path d="M22.500 13A10.500 10.500 0 1 1 20 5.200l2 2.800M22.500 0v8.500H14" /></svg>
        <div class="omnibox">
          <div class="chip">
            <svg class="ic24" viewBox="0 0 24 24"><path d="M7 0h10l7 7v10l-7 7H7l-7-7V7z" fill="#e9a9a0" /><path d="M7.500 7.500l9 9m0-9l-9 9" stroke="#3c3c3c" stroke-width="2.800" /></svg>
            <span>Not Secure</span>
          </div>
          <span class="url">mevans2392.github.io<em>/angular_map/</em></span>
          <svg class="star" viewBox="0 0 34 32"><path d="M17 3.500l4 9 10 1-7.500 6.500 2.200 9.700L17 24.600l-8.700 5.100 2.200-9.700L3 13.500l10-1z" /></svg>
        </div>
        <svg class="ng" viewBox="0 0 24 24">
          <defs><linearGradient id="ngl" x2="0" y2="1"><stop stop-color="#e040d8" /><stop offset="1" stop-color="#f03a50" /></linearGradient><linearGradient id="ngr" x2="0" y2="1"><stop stop-color="#b030f0" /><stop offset="1" stop-color="#6a30f5" /></linearGradient></defs>
          <path d="M0 4l9-4L1.500 17z" fill="url(#ngl)" /><path d="M24 4l-9-4 7.500 17z" fill="url(#ngr)" /><path d="M12 7l3.500 8h-7z" fill="#d832a8" /><path d="M7 18h10l1.500 3L12 24.500 5.500 21z" fill="#f0344c" />
        </svg>
        <svg class="puzzle" viewBox="0 0 32 32"><path d="M4 6h22q1.500 0 1.500 1.500V28q0 2.500-2 2.500H4Q1.500 30.500 1.500 28v-4.500c6.500 0 6.500-11 0-11V7.500Q1.500 5.500 4 6z" /><path class="solid" d="M10 5a4 4 0 0 1 8 0zM28 14a4 4 0 0 1 0 8z" /></svg>
        <i class="rule r1"></i>
        <b class="avatar">M</b>
        <svg class="kebab" viewBox="0 0 8 30"><circle cx="4" cy="4" r="3.200" /><circle cx="4" cy="15" r="3.200" /><circle cx="4" cy="26" r="3.200" /></svg>
      </nav>

      <div class="bookmarks">
        <a class="b1"><svg class="ic32" viewBox="0 0 32 32"><path d="M6 15a10 10 0 0 1 20-1l-8 9z" fill="#2560b8" /><path d="M7 26.500a7.500 7.500 0 0 1 0-15c4-1 8 1 12 5L9 25z" fill="#3377d6" /><path d="M18 17c4-5 14-2 14 4 0 3-2 5-5 5.500z" fill="#3f8fe0" /><path d="M2 24l16-8.500 13 8c-1 2-3 3-5 3H7c-2 0-4-1-5-2.500z" fill="#50a6ea" /></svg><span>Home - OneDrive</span></a>
        <a class="b2"><svg class="ic32" viewBox="0 0 32 32"><path d="M0 8h7l3.500 8 3.500-8h5l2 4.500 2-1.500 3.500 3-4.500 13h-2L17 17l-5 10h-2z" fill="#41a06c" /><path d="M26 6h4.500l-2.500 3c4 0 3 4.500 0 4-1.500 0-2-1-2-1.500" stroke="#41a06c" stroke-width="1.400" fill="none" /></svg><span>W3Schools</span></a>
        <a class="b3"><svg class="ic32" viewBox="0 0 32 32"><path d="M2 11l7 5v11H4q-2 0-2-2z" fill="#4c82ec" /><path d="M30 11l-7 5v11h5q2 0 2-2z" fill="#4fa855" /><path d="M23 8l2-2q5-2 5 3v2.500L23 17z" fill="#f0be38" /><path d="M2 9q0-5 5-3l2 2v9l-7-5.500z" fill="#b93229" /><path d="M9 8l7 5.500L23 8v9l-7 5.500L9 17z" fill="#dd5044" /></svg><span>Inbox</span></a>
        <a class="b4"><svg class="ic32" viewBox="0 0 32 32" fill="#12305a"><path d="M6 3l4 1 6-2 6 2 4-1v10l4 3c2 2 0 5-3 5l-4 4h-14l-4-4c-3 0-5-3-3-5l4-3z" /><circle cx="12" cy="10" r="3.300" stroke="#3c4d66" /><circle cx="20" cy="10" r="3.300" stroke="#3c4d66" /><path d="M14 13h4l-2 4z" fill="#3c4d66" /><path d="M3 23c7 5 19 5 26 0M5 26c7 4 15 4 22 0M9 29c5 2 9 2 14 0" stroke="#12305a" stroke-width="1.500" fill="none" /></svg><span>Owls Nest</span></a>
        <a class="b5"><b class="sq pf">Pf</b><span>WGU</span></a>
        <a class="b6"><b class="sq inv">in</b><span>InVision</span></a>
        <a class="b7"><svg class="ic32" viewBox="0 0 32 32"><defs><linearGradient id="ps" x2="0" y2="1"><stop stop-color="#e0633a" /><stop offset="1" stop-color="#d52c92" /></linearGradient></defs><circle cx="16" cy="16" r="16" fill="url(#ps)" /><path d="M9.500 10v12l5-3M9.500 10l5 2.500M13.500 9v14l11-7zM13.500 13l5 3-5 3.500" fill="none" stroke="#fff" stroke-width="1.600" /></svg><span>AWS Certified Clo...</span></a>
        <i class="rule r2"></i>
        <svg class="folder" viewBox="0 0 32 24"><path d="M3.500 1.500h8l4 4h13q2 0 2 2v13q0 2-2 2h-25q-2 0-2-2v-17q0-2 2-2z" /></svg>
        <span class="all">All Bookmarks</span>
      </div>
    </div>

    <main>
      <svg class="map" viewBox="254.5 362 1170 780">
        {#each sheets as s}
          <g transform={s.at}>
            <path class="line" d={trace(s.coast, 3)} />
            <path class="line" d={trace(s.fjord, s.rough)} />
            {#if s.border}<path class="line" d={trace(s.border, 0)} />{/if}
            {#if s.borderRough}<path class="line" d={trace(s.borderRough, 3)} />{/if}
            <path class="speck" d={dots(s.specks)} />
          </g>
        {/each}
        <g transform="translate(270 370) scale(.33333)">
          <path class="us" d={trace(alaska, 3)} />
          <path class="us pale" d={trace(panhandle, 5)} />
          <path class="edge" d="M304 662V868" />
        </g>
        <g transform="translate(270 680) scale(.33333)">
          <path class="us" d={trace(states, 2)} />
          <path class="us pale" d={trace(sounds, 3)} />
          <path class="us" d={trace(hawaii, 2)} />
          <path class="edge" d="M472 122H728" />
        </g>
      </svg>
      <section class="card">
        {#each facts as [label, value]}
          <p>{label}: {value}</p>
        {/each}
      </section>
    </main>
  </div>
</div>

<style>
  :global(body) { background: #fff; }
  .desktop { width: 2849px; height: 1748px; overflow: hidden; background: linear-gradient(#cfccc4 50%, #151515 50%); }
  .window { width: 2849px; height: 1748px; box-sizing: border-box; border-radius: 22px; overflow: hidden; background: linear-gradient(#202221 110px, #fff 110px); display: flex; flex-direction: column; font-family: Inter, "Liberation Sans", sans-serif; }
  svg { display: block; flex: none; overflow: visible; }
  .ic32 { width: 32px; height: 32px; }
  .ic24 { width: 24px; height: 24px; }
  .tabs { height: 80px; flex: none; box-sizing: border-box; border-top: 3px solid #6a6e6d; border-radius: 22px 22px 0 0; background: #202221; display: flex; padding: 9px 11px 0 40px; }
  .lights { display: flex; gap: 16px; padding-top: 17px; width: 158px; height: 24px; }
  .lights i { width: 24px; height: 24px; border-radius: 50%; background: #7b7b7b; }
  .tab { height: 68px; padding-bottom: 12px; box-sizing: border-box; display: flex; align-items: center; gap: 16px; color: #c7c7c7; font-size: 24px; }
  .title { flex: 1; white-space: nowrap; padding-bottom: 2px; }
  .idle { width: 460px; padding-right: 35px; }
  .active { position: relative; width: 464px; padding: 0 23px 12px 16px; background: #3c3c3c; border-radius: 22px 22px 0 0; color: #e3e3e3; }
  .active::before, .active::after { content: ''; position: absolute; bottom: 0; width: 24px; height: 24px; }
  .active::before { left: -24px; background: radial-gradient(circle at 0 0, transparent 23.500px, #3c3c3c 24px); }
  .active::after { right: -24px; background: radial-gradient(circle at 100% 0, transparent 23.500px, #3c3c3c 24px); }
  .x { width: 18px; height: 18px; stroke: currentColor; stroke-width: 2.800; }
  .plus { width: 22px; height: 22px; margin: 17px 0 0 29px; stroke: #c7c7c7; stroke-width: 3; }
  .search { margin-left: auto; width: 56px; height: 56px; padding: 0; border: 0; border-radius: 20px; background: #3c3c3c; display: grid; place-items: center; }
  .search svg { width: 18px; height: 11px; stroke: #e3e3e3; stroke-width: 3.500; fill: none; }

  .chrome { height: 162px; flex: none; box-sizing: border-box; background: #3c3c3c; border-bottom: 2px solid #4a4a4a; border-radius: 16px 16px 0 0; }
  .toolbar { height: 92px; display: flex; align-items: center; padding-left: 30px; }
  .nav { width: 24px; height: 24px; margin-right: 48px; fill: none; stroke: #c7c7c7; stroke-width: 3; }
  .nav.dim { stroke: #7c7c7c; }
  .nav + .omnibox { margin-left: -8px; }
  .omnibox { width: 2264px; height: 68px; box-sizing: border-box; border-radius: 34px; background: #282828; display: flex; align-items: center; padding: 0 31px 0 10px; }
  .chip { width: 202px; height: 48px; box-sizing: border-box; border-radius: 24px; background: #3c3c3c; display: flex; align-items: center; gap: 12px; padding-left: 16px; color: #e9a9a0; font-size: 24px; font-weight: 500; white-space: nowrap; }
  .chip span { padding-bottom: 1px; }
  .url { margin-left: 16px; color: #e3e3e3; font-size: 28px; white-space: nowrap; flex: 1; letter-spacing: -0.050px; }
  .url em { font-style: normal; color: #c7c7c7; }
  .star { width: 34px; height: 32px; fill: none; stroke: #c7c7c7; stroke-width: 3; }
  .ng { width: 24px; height: 24px; margin-left: 40px; }
  .puzzle { width: 32px; height: 32px; margin: -4px 0 0 46px; fill: none; stroke: #c7c7c7; stroke-width: 3.200; }
  .puzzle .solid { fill: #c7c7c7; stroke: none; }
  .rule { width: 4px; height: 32px; border-radius: 2px; background: #5f5f5f; }
  .r1 { margin-left: 34px; }
  .avatar { width: 40px; height: 40px; margin-left: 32px; border-radius: 50%; background: #3c887e; color: #fff; font-size: 21px; font-weight: 400; line-height: 40px; text-align: center; }
  .kebab { width: 8px; height: 30px; margin-left: 48px; fill: #c7c7c7; }

  .bookmarks { height: 56px; display: flex; align-items: center; padding-left: 22px; color: #c7c7c7; font-size: 24px; white-space: nowrap; letter-spacing: -0.070px; }
  .bookmarks a { display: flex; align-items: center; gap: 12px; }
  .bookmarks span { padding-bottom: 2px; }
  .b1 { width: 274px; }
  .b2 { width: 206px; }
  .b3 { width: 138px; }
  .b4 { width: 192px; }
  .b5 { width: 136px; }
  .b6 { width: 164px; }
  .sq { width: 32px; height: 32px; color: #fff; font-size: 23px; line-height: 33px; text-align: center; letter-spacing: -1px; }
  .pf { background: #a33131; }
  .inv { background: #ea4569; border-radius: 3px; font-family: "Liberation Serif", serif; font-style: italic; font-size: 30px; line-height: 29px; }
  .r2 { margin-left: auto; }
  .folder { width: 32px; height: 24px; margin-left: 32px; fill: none; stroke: #c7c7c7; stroke-width: 3; }
  .all { width: 189px; margin-left: 16px; }

  main { width: 2340px; margin: 0 auto; padding-top: 120px; display: grid; grid-template-columns: 1fr 1fr; align-items: start; }
  .map { width: 1170px; height: 780px; }
  .line, .speck, .us, .edge { fill: none; stroke: #000; stroke-width: 1.350; vector-effect: non-scaling-stroke; stroke-linejoin: round; }
  .speck { stroke-width: 2; }
  .us { fill: #ea3323; stroke: #ee7f55; stroke-width: 1.500; }
  .pale { fill: #ee7048; }
  .edge { stroke: #b57a50; }
  .card { height: 360px; margin: 23px 1px 0 -1px; box-sizing: border-box; padding-top: 1px; border-radius: 50px; background: #d3d3d3; color: #333; font: 28px/40px "Liberation Sans", Arial, sans-serif; letter-spacing: 0.120px; text-align: center; }
  .card p { margin: 0 0 20px; }
</style>
